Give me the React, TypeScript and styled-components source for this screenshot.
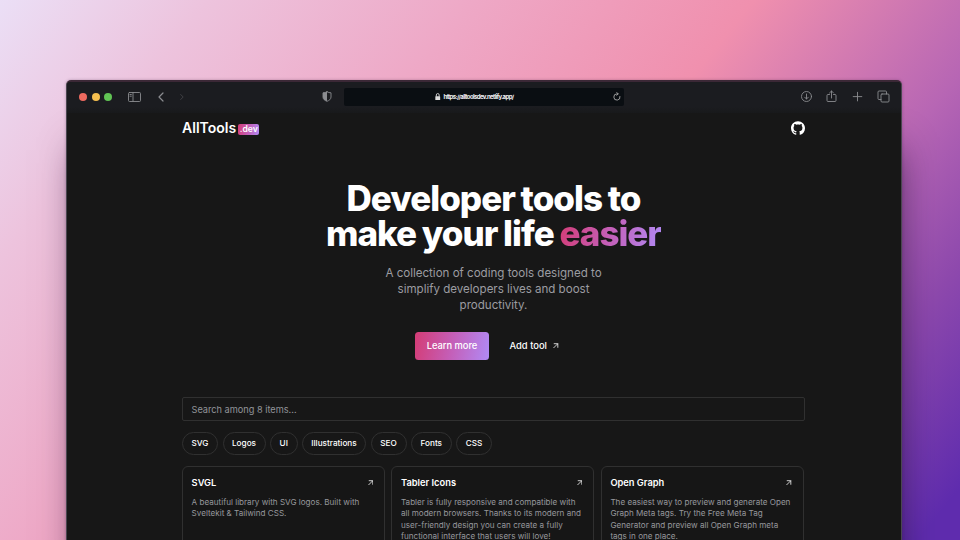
import React from "react";
import styled, { createGlobalStyle } from "styled-components";

const Global = createGlobalStyle`
  * { box-sizing: border-box; }
  body { margin: 0; overflow: hidden; font-family: Inter, "Liberation Sans", sans-serif; }
`;
const accent = "linear-gradient(100deg, #d43c75 0%, #c45fb8 50%, #b18af5 100%)";

const Backdrop = styled.div`
  height: 540px;
  padding: 80px 58px 0 66px;
  overflow: hidden;
  background: linear-gradient(129deg, #ebdff6 0%, #edc3dd 15%, #eea8c6 34%, #f090ae 54%, #b766b4 73%, #8e49ad 84%, #5f2cae 97%);
`;
const Window = styled.div`
  height: 600px;
  border: 1px solid #4a4650;
  border-top: 2px solid #3b2836;
  border-radius: 5px 5px 0 0;
  background: #171717;
  overflow: hidden;
`;
const Shadow = styled.div`
  border-radius: 5px;
  box-shadow: 4px 60px 36px -10px rgba(25, 8, 45, 0.7), 0 0 3px rgba(60, 30, 60, 0.35);
`;
const Chrome = styled.div`
  height: 31px;
  display: grid;
  grid-template-columns: 277px 1fr 277px;
  align-items: center;
  padding-bottom: 2px;
  background: linear-gradient(#1b1c20 80%, #18191b);
  color: #8b8c90;
`;
const ChromeLeft = styled.div`
  display: flex;
  align-items: center;
  padding-left: 12px;
`;
const Dot = styled.span<{ $c: string }>`
  width: 8px;
  height: 8px;
  margin-right: 4.7px;
  border-radius: 50%;
  background: ${(p) => p.$c};
`;
const Icon = styled.svg<{ $w: number; $ml?: number }>`
  display: block;
  flex: none;
  width: ${(p) => p.$w}px;
  height: auto;
  margin-left: ${(p) => p.$ml ?? 0}px;
  fill: none;
  stroke: currentColor;
  stroke-linecap: round;
  stroke-linejoin: round;
`;
const Address = styled.div`
  height: 18px;
  display: flex;
  align-items: center;
  padding: 0 3px 0 91px;
  background: #0a0e12;
  border-radius: 2px;
`;
const Url = styled.span`
  flex: 1;
  margin-left: 3px;
  color: #f2f2f2;
  font-size: 6px;
  font-weight: 700;
  letter-spacing: -0.61px;
  white-space: nowrap;
`;
const ChromeRight = styled.div`
  display: flex;
  align-items: center;
  justify-content: flex-end;
  gap: 12.8px;
  padding-right: 11px;
`;
const Page = styled.main`
  width: 623px;
  margin-left: 115px;
  color: #fff;
`;
const Header = styled.header`
  height: 30px;
  display: flex;
  align-items: center;
  justify-content: space-between;
`;
const Brand = styled.div`
  display: flex;
  align-items: center;
  font-size: 14px;
  font-weight: 600;
  line-height: 20px;
  letter-spacing: 0.02px;
`;
const Tag = styled.span`
  width: 21px;
  height: 11px;
  margin: 3px 0 0 2px;
  border-radius: 2px;
  background: ${accent};
  font-size: 8.5px;
  line-height: 11px;
  letter-spacing: 0;
  text-align: center;
`;
const Hero = styled.section`
  display: flex;
  flex-direction: column;
  align-items: center;
  padding-top: 38px;
`;
const Title = styled.h1`
  margin: 0;
  font-size: 35px;
  font-weight: 800;
  line-height: 35px;
  letter-spacing: -1px;
  word-spacing: -0.9px;
  text-align: center;
  white-space: nowrap;
`;
const Highlight = styled.span`
  background: ${accent};
  background-clip: text;
  -webkit-background-clip: text;
  color: transparent;
  font-weight: 800;
  letter-spacing: -1px;
`;
const Lead = styled.p`
  margin: 14px 0 0;
  color: #9b9ca1;
  font-size: 11.6px;
  line-height: 16.2px;
  text-align: center;
  letter-spacing: -0.02px;
`;
const Actions = styled.div`
  display: flex;
  align-items: center;
  width: 157px;
  margin-top: 18px;
`;
const Primary = styled.button`
  width: 74px;
  height: 28px;
  flex: none;
  padding: 0;
  border: 0;
  border-radius: 3.5px;
  background: ${accent};
  color: #fff;
  font: 500 9.3px Inter, sans-serif;
`;
const Secondary = styled.a`
  display: flex;
  align-items: center;
  margin-left: 20.5px;
  font-size: 9.4px;
  font-weight: 500;
  white-space: nowrap;
`;
const Search = styled.div`
  height: 24px;
  margin-top: 37px;
  padding-left: 8.5px;
  border: 1px solid #303030;
  border-radius: 2px;
  color: #929499;
  font-size: 9.2px;
  line-height: 23px;
`;
const Filters = styled.div`
  display: flex;
  gap: 4.5px;
  margin-top: 11px;
`;
const Chip = styled.span<{ $w: number }>`
  width: ${(p) => p.$w}px;
  height: 23px;
  border: 1px solid #303030;
  border-radius: 12px;
  font-size: 8.2px;
  font-weight: 500;
  line-height: 21px;
  text-align: center;
  white-space: nowrap;
`;
const Cards = styled.div`
  display: grid;
  grid-template-columns: repeat(3, 203px);
  gap: 6.4px;
  margin-top: 11px;
`;
const Card = styled.article`
  height: 110px;
  padding: 8.5px 11px 9px 8.6px;
  border: 1px solid #303030;
  border-radius: 6px;
  background: #161616;
`;
const CardHead = styled.h2`
  display: flex;
  align-items: center;
  justify-content: space-between;
  margin: 0;
  font-size: 9.3px;
  font-weight: 600;
  line-height: 15px;
`;
const CardText = styled.p`
  margin: 6.5px 0 0;
  color: #96989d;
  font-size: 8.1px;
  line-height: 11.6px;
  white-space: nowrap;
`;

const Arrow = ({ ml = 0 }: { ml?: number }) => (
  <Icon $w={5.5} $ml={ml} viewBox="0 0 12 12" strokeWidth="1.7"><path d="M1.5 10.5 10 2M2.5 1.5h8v8" /></Icon>
);
const chips: [string, number][] = [["SVG", 36], ["Logos", 43], ["UI", 27.5], ["Illustrations", 64], ["SEO", 36], ["Fonts", 40.5], ["CSS", 36]];
const cards = [
  { name: "SVGL", lines: ["A beautiful library with SVG logos. Built with", "Sveltekit & Tailwind CSS."] },
  { name: "Tabler Icons", lines: ["Tabler is fully responsive and compatible with", "all modern browsers. Thanks to its modern and", "user-friendly design you can create a fully", "functional interface that users will love!"] },
  { name: "Open Graph", lines: ["The easiest way to preview and generate Open", "Graph Meta tags. Try the Free Meta Tag", "Generator and preview all Open Graph meta", "tags in one place."] },
];
const Lines = ({ of }: { of: string[] }) => <>{of.map((t) => <React.Fragment key={t}>{t}<br /></React.Fragment>)}</>;

export default function App() {
  return (
    <Backdrop>
      <Global />
      <Shadow>
        <Window>
          <Chrome>
            <ChromeLeft>
              <Dot $c="#ed6a5f" /><Dot $c="#f5bf4f" /><Dot $c="#61c454" />
              <Icon $w={13} $ml={11} viewBox="0 0 13 10" strokeWidth="0.9"><rect x=".5" y=".5" width="12" height="9" rx="1" /><path d="M5 .5v9M2 2.5h1.3M2 4.2h1.3" /></Icon>
              <Icon $w={6} $ml={17} viewBox="0 0 6 10" strokeWidth="1.2"><path d="M5 1 1 5l4 4" /></Icon>
              <Icon $w={4} $ml={16} viewBox="0 0 4 6" strokeWidth="0.8" opacity=".4"><path d="m.7.5 2.5 2.5L.7 5.5" /></Icon>
              <Icon $w={10} $ml={138} viewBox="0 0 10 11"><path d="M5 .8c1.200.7 2.600 1 4 1v4.200c0 2.100-1.700 3.500-4 4.300C2.700 9.500 1 8.100 1 6V1.800c1.400 0 2.800-.3 4-1Z" strokeWidth=".9" /><path d="M5 .8v9.500C2.700 9.500 1 8.100 1 6V1.800c1.400 0 2.800-.3 4-1Z" fill="currentColor" stroke="none" /></Icon>
            </ChromeLeft>
            <Address>
              <Icon $w={5.5} viewBox="0 0 5 7" color="#ddd" strokeWidth=".8"><rect x=".3" y="3" width="4.400" height="3.700" fill="currentColor" stroke="none" rx=".5" /><path d="M1.200 3V1.800a1.300 1.300 0 0 1 2.600 0V3" /></Icon>
              <Url>https://alltoolsdev.netlify.app/</Url>
              <Icon $w={8} viewBox="0 0 8 9" color="#aaa" strokeWidth=".9"><path d="M7 4.500A3.100 3.100 0 1 1 4 1.900h1M3.800.5 5.200 1.900 3.800 3.300" /></Icon>
            </Address>
            <ChromeRight>
              <Icon $w={13} viewBox="0 0 13 13" strokeWidth=".9"><circle cx="6.500" cy="6.500" r="5" /><path d="M6.500 4v5M4.700 7.200l1.800 1.800 1.800-1.800" /></Icon>
              <Icon $w={13} viewBox="0 0 13 13" strokeWidth=".9"><path d="M4.500 4.500H3a1 1 0 0 0-1 1v5a1 1 0 0 0 1 1h7a1 1 0 0 0 1-1v-5a1 1 0 0 0-1-1H8.500M6.500 8V1M4.500 3l2-2 2 2" /></Icon>
              <Icon $w={13} viewBox="0 0 13 13" strokeWidth=".9"><path d="M6.500 2.300v8.600M2.200 6.600h8.600" /></Icon>
              <Icon $w={13} viewBox="0 0 13 13" strokeWidth=".9"><rect x="4" y="4" width="8" height="8" rx="1" /><path d="M4 9.500H2a1 1 0 0 1-1-1V2a1 1 0 0 1 1-1h6.500a1 1 0 0 1 1 1v2" /></Icon>
            </ChromeRight>
          </Chrome>
          <Page>
            <Header>
              <Brand>AllTools<Tag>.dev</Tag></Brand>
              <Icon $w={14} viewBox="0 0 24 24"><path fill="#fff" stroke="none" d="M12 .297c-6.630 0-12 5.373-12 12 0 5.303 3.438 9.800 8.205 11.385.6.113.82-.258.82-.577 0-.285-.010-1.040-.015-2.040-3.338.724-4.042-1.610-4.042-1.610C4.422 18.070 3.633 17.700 3.633 17.700c-1.087-.744.084-.729.084-.729 1.205.084 1.838 1.236 1.838 1.236 1.070 1.835 2.809 1.305 3.495.998.108-.776.417-1.305.760-1.605-2.665-.300-5.466-1.332-5.466-5.930 0-1.310.465-2.380 1.235-3.220-.135-.303-.540-1.523.105-3.176 0 0 1.005-.322 3.300 1.230.960-.267 1.980-.399 3-.405 1.020.006 2.040.138 3 .405 2.280-1.552 3.285-1.230 3.285-1.230.645 1.653.240 2.873.120 3.176.765.840 1.230 1.910 1.230 3.220 0 4.610-2.805 5.625-5.475 5.920.420.360.810 1.096.810 2.220 0 1.606-.015 2.896-.015 3.286 0 .315.210.690.825.570C20.565 22.092 24 17.592 24 12.297c0-6.627-5.373-12-12-12" /></Icon>
            </Header>
            <Hero>
              <Title>Developer tools to<br />make your life <Highlight>easier</Highlight></Title>
              <Lead>A collection of coding tools designed to<br />simplify developers lives and boost<br />productivity.</Lead>
              <Actions><Primary>Learn more</Primary><Secondary>Add tool<Arrow ml={6.5} /></Secondary></Actions>
            </Hero>
            <Search>Search among 8 items...</Search>
            <Filters>{chips.map(([t, w]) => <Chip key={t} $w={w}>{t}</Chip>)}</Filters>
            <Cards>
              {cards.map((c) => (
                <Card key={c.name}><CardHead>{c.name}<Arrow /></CardHead><CardText><Lines of={c.lines} /></CardText></Card>
              ))}
            </Cards>
          </Page>
        </Window>
      </Shadow>
    </Backdrop>
  );
}
